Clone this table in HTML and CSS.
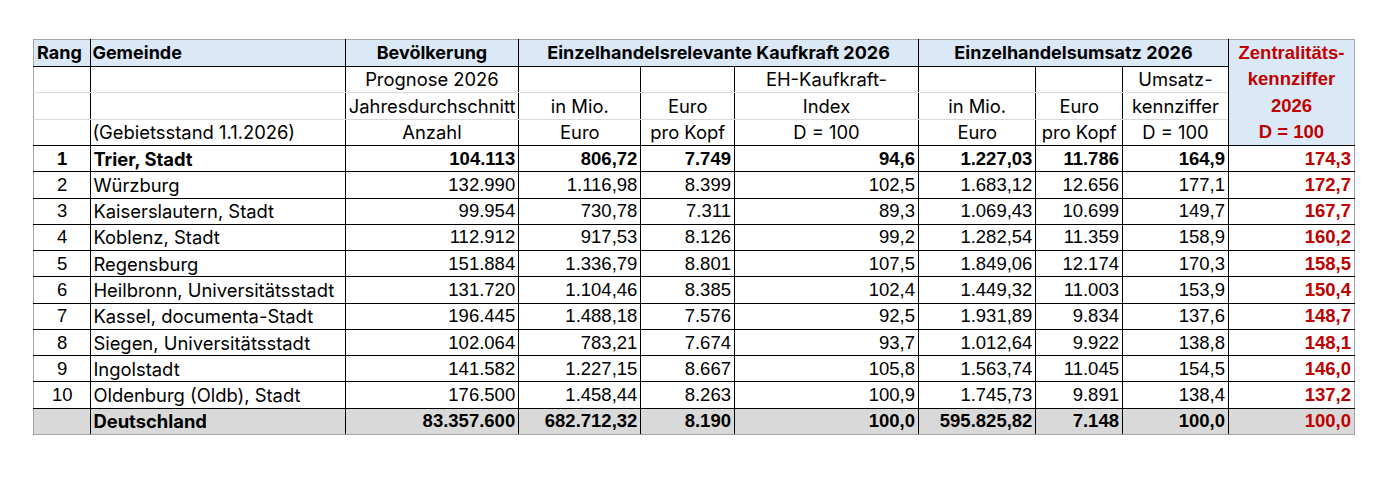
FILE: index.html
```html
<!DOCTYPE html>
<html lang="de">
<head>
<meta charset="utf-8">
<title>Zentralitätskennziffer 2026</title>
<link rel="stylesheet" href="styles.css">
</head>
<body>
<div class="page">
<table class="sheet">
  <colgroup>
    <col class="c1"><col class="c2"><col class="c3"><col class="c4"><col class="c5">
    <col class="c6"><col class="c7"><col class="c8"><col class="c9"><col class="c10">
  </colgroup>
  <thead>
    <tr class="h1">
      <th class="lbl left">Rang</th>
      <th class="lbl left gem">Gemeinde</th>
      <th class="lbl">Bevölkerung</th>
      <th class="lbl" colspan="3">Einzelhandelsrelevante Kaufkraft 2026</th>
      <th class="lbl" colspan="3">Einzelhandelsumsatz 2026</th>
      <th class="zk" rowspan="4">
        <span class="zl">Zentralitäts-</span>
        <span class="zl">kennziffer</span>
        <span class="zl">2026</span>
        <span class="zl">D = 100</span>
      </th>
    </tr>
    <tr class="sub">
      <td></td><td></td>
      <td class="lbl">Prognose 2026</td>
      <td></td><td></td>
      <td class="lbl">EH-Kaufkraft-</td>
      <td></td><td></td>
      <td class="lbl">Umsatz-</td>
    </tr>
    <tr class="sub">
      <td></td><td></td>
      <td class="lbl">Jahresdurchschnitt</td>
      <td class="lbl">in Mio.</td>
      <td class="lbl">Euro</td>
      <td class="lbl">Index</td>
      <td class="lbl">in Mio.</td>
      <td class="lbl">Euro</td>
      <td class="lbl">kennziffer</td>
    </tr>
    <tr class="sub sub-last">
      <td></td>
      <td class="lbl left gem">(Gebietsstand 1.1.2026)</td>
      <td class="lbl">Anzahl</td>
      <td class="lbl">Euro</td>
      <td class="lbl">pro Kopf</td>
      <td class="lbl">D = 100</td>
      <td class="lbl">Euro</td>
      <td class="lbl">pro Kopf</td>
      <td class="lbl">D = 100</td>
    </tr>
  </thead>
  <tbody>
    <tr class="bold">
      <td class="rang">1</td><td class="lbl name">Trier, Stadt</td>
      <td class="num">104.113</td><td class="num">806,72</td><td class="num">7.749</td><td class="num">94,6</td>
      <td class="num">1.227,03</td><td class="num">11.786</td><td class="num">164,9</td><td class="num red">174,3</td>
    </tr>
    <tr>
      <td class="rang">2</td><td class="lbl name">Würzburg</td>
      <td class="num">132.990</td><td class="num">1.116,98</td><td class="num">8.399</td><td class="num">102,5</td>
      <td class="num">1.683,12</td><td class="num">12.656</td><td class="num">177,1</td><td class="num red">172,7</td>
    </tr>
    <tr>
      <td class="rang">3</td><td class="lbl name">Kaiserslautern, Stadt</td>
      <td class="num">99.954</td><td class="num">730,78</td><td class="num">7.311</td><td class="num">89,3</td>
      <td class="num">1.069,43</td><td class="num">10.699</td><td class="num">149,7</td><td class="num red">167,7</td>
    </tr>
    <tr>
      <td class="rang">4</td><td class="lbl name">Koblenz, Stadt</td>
      <td class="num">112.912</td><td class="num">917,53</td><td class="num">8.126</td><td class="num">99,2</td>
      <td class="num">1.282,54</td><td class="num">11.359</td><td class="num">158,9</td><td class="num red">160,2</td>
    </tr>
    <tr>
      <td class="rang">5</td><td class="lbl name">Regensburg</td>
      <td class="num">151.884</td><td class="num">1.336,79</td><td class="num">8.801</td><td class="num">107,5</td>
      <td class="num">1.849,06</td><td class="num">12.174</td><td class="num">170,3</td><td class="num red">158,5</td>
    </tr>
    <tr>
      <td class="rang">6</td><td class="lbl name">Heilbronn, Universitätsstadt</td>
      <td class="num">131.720</td><td class="num">1.104,46</td><td class="num">8.385</td><td class="num">102,4</td>
      <td class="num">1.449,32</td><td class="num">11.003</td><td class="num">153,9</td><td class="num red">150,4</td>
    </tr>
    <tr>
      <td class="rang">7</td><td class="lbl name">Kassel, documenta-Stadt</td>
      <td class="num">196.445</td><td class="num">1.488,18</td><td class="num">7.576</td><td class="num">92,5</td>
      <td class="num">1.931,89</td><td class="num">9.834</td><td class="num">137,6</td><td class="num red">148,7</td>
    </tr>
    <tr>
      <td class="rang">8</td><td class="lbl name">Siegen, Universitätsstadt</td>
      <td class="num">102.064</td><td class="num">783,21</td><td class="num">7.674</td><td class="num">93,7</td>
      <td class="num">1.012,64</td><td class="num">9.922</td><td class="num">138,8</td><td class="num red">148,1</td>
    </tr>
    <tr>
      <td class="rang">9</td><td class="lbl name">Ingolstadt</td>
      <td class="num">141.582</td><td class="num">1.227,15</td><td class="num">8.667</td><td class="num">105,8</td>
      <td class="num">1.563,74</td><td class="num">11.045</td><td class="num">154,5</td><td class="num red">146,0</td>
    </tr>
    <tr>
      <td class="rang">10</td><td class="lbl name">Oldenburg (Oldb), Stadt</td>
      <td class="num">176.500</td><td class="num">1.458,44</td><td class="num">8.263</td><td class="num">100,9</td>
      <td class="num">1.745,73</td><td class="num">9.891</td><td class="num">138,4</td><td class="num red">137,2</td>
    </tr>
    <tr class="bold total">
      <td class="rang"></td><td class="lbl name">Deutschland</td>
      <td class="num">83.357.600</td><td class="num">682.712,32</td><td class="num">8.190</td><td class="num">100,0</td>
      <td class="num">595.825,82</td><td class="num">7.148</td><td class="num">100,0</td><td class="num red">100,0</td>
    </tr>
  </tbody>
</table>
</div>
</body>
</html>
```

FILE: styles.css
```css
html, body {
  margin: 0;
  padding: 0;
  background: #ffffff;
}

.page {
  padding: 39px 0 0 33px;
}

.sheet {
  border-collapse: collapse;
  table-layout: fixed;
  width: 1321px;
  font-family: "Liberation Sans", Arial, sans-serif;
  font-size: 18.5px;
  color: #000000;
}

.c1 { width: 57.4px; }
.c2 { width: 254.3px; }
.c3 { width: 173.5px; }
.c4 { width: 122.2px; }
.c5 { width: 93.6px; }
.c6 { width: 184px; }
.c7 { width: 117.4px; }
.c8 { width: 86.6px; }
.c9 { width: 106px; }
.c10 { width: 126px; }

.sheet tr {
  height: 26.27px;
}

.sheet th,
.sheet td {
  border: 1px solid #000000;
  padding: 0 3px;
  line-height: 22px;
  white-space: nowrap;
  overflow: hidden;
  vertical-align: middle;
  text-align: center;
  font-weight: normal;
}

/* outer frame */
.sheet tr > :first-child { border-left-color: #a6a6a6; }
.sheet tr > :last-child { border-right-color: #a6a6a6; }
.sheet .h1 > * { border-top-color: #a6a6a6; }
.sheet .total > * { border-bottom-color: #a6a6a6; }

/* header */
.sheet .h1 th {
  background: #dbe9f7;
  font-weight: bold;
}

.sheet .lbl {
  font-family: Inter, "Noto Sans", sans-serif;
  font-size: 18.4px;
}

.sheet .h1 .lbl {
  font-size: 18px;
}

.sheet .left {
  text-align: left;
}

.sheet .gem {
  padding-left: 1px;
}

.sheet .sub td {
  border-top-color: #d9d9d9;
  border-bottom-color: #d9d9d9;
}

.sheet .sub-last td {
  border-bottom-color: #000000;
}

.sheet .zk {
  background: #dbe9f7;
  color: #c00000;
  font-weight: bold;
  vertical-align: top;
  padding: 0;
}

.zl {
  display: block;
  line-height: 26.27px;
}

/* body */
.sheet .rang {
  text-align: center;
}

.sheet .name {
  text-align: left;
  padding-left: 2px;
}

.sheet .num {
  text-align: right;
}

.sheet .bold td {
  font-weight: bold;
}

.sheet .red {
  color: #c00000;
  font-weight: bold;
}

.sheet .total td {
  background: #d9d9d9;
}
```
